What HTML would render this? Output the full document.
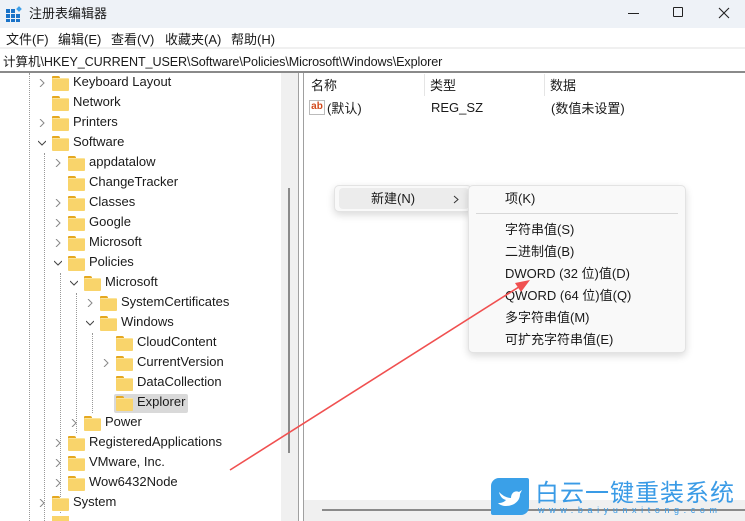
<!DOCTYPE html>
<html><head><meta charset="utf-8"><style>
*{margin:0;padding:0;box-sizing:border-box}
html{overflow:hidden;width:745px;height:521px}
body{width:745px;height:521px;overflow:hidden;background:#fff;font-family:"Liberation Sans","Noto Sans CJK SC",sans-serif;font-size:13px;color:#1a1a1a;position:relative}
.a{position:absolute;white-space:nowrap}
.row{position:absolute;height:20px;line-height:20px;white-space:nowrap;width:260px}
.fd{position:absolute;width:17px;height:14px;top:3px}
.fd:before{content:"";position:absolute;left:0;top:0;width:8px;height:4px;background:#e5a820;border-radius:1px 2px 0 0}
.fd:after{content:"";position:absolute;left:0;top:2px;width:17px;height:12px;background:#f9d46b;border-top:1px solid #fbe49b;border-radius:1px}
.ch{position:absolute;top:6px;width:8px;height:8px}
.t{position:absolute;left:21px;top:-1px}
.vd{position:absolute;width:0;border-left:1px dotted #999}
.c{margin-top:-2px}
</style></head><body>
<div class="a" style="left:0;top:0;width:745px;height:28px;background:#eef2f7"></div>
<svg class="a" style="left:6px;top:6px" width="16" height="16"><rect x="0" y="3" width="4" height="4" fill="#1a73c8"/><rect x="5" y="3" width="4" height="4" fill="#1a73c8"/><rect x="0" y="8" width="4" height="4" fill="#1a73c8"/><rect x="5" y="8" width="4" height="4" fill="#1a73c8"/><rect x="10" y="8" width="4" height="4" fill="#1a73c8"/><rect x="0" y="13" width="4" height="3" fill="#1a73c8"/><rect x="5" y="13" width="4" height="3" fill="#1a73c8"/><rect x="10" y="13" width="4" height="3" fill="#1a73c8"/><rect x="11" y="1" width="4" height="4" fill="#3fa0e8" transform="rotate(45 13 3)"/></svg>
<div class="a" style="left:29px;top:3px">注册表编辑器</div>
<div class="a" style="left:628px;top:13px;width:11px;height:1px;background:#222"></div>
<div class="a" style="left:673px;top:7px;width:10px;height:10px;border:1px solid #222;border-radius:1px"></div>
<svg class="a" style="left:718px;top:7px" width="12" height="12"><path d="M1 1L11 11M11 1L1 11" stroke="#222" stroke-width="1.1"/></svg>
<div class="a" style="left:6px;top:29px">文件(F)</div>
<div class="a" style="left:58px;top:29px">编辑(E)</div>
<div class="a" style="left:111px;top:29px">查看(V)</div>
<div class="a" style="left:165px;top:29px">收藏夹(A)</div>
<div class="a" style="left:231px;top:29px">帮助(H)</div>
<div class="a" style="left:0;top:47px;width:745px;height:2px;background:#f0f0f0"></div>
<div class="a" style="left:3px;top:51px;font-size:12.6px;letter-spacing:-0.1px">计算机\HKEY_CURRENT_USER\Software\Policies\Microsoft\Windows\Explorer</div>
<div class="a" style="left:0;top:71px;width:745px;height:2px;background:#8a8a8a"></div>
<div class="a" style="left:0;top:73px;width:299px;height:448px;border-right:1px solid #a0a0a0"></div>
<div class="a" style="left:281px;top:73px;width:17px;height:448px;background:#f0f0f0"></div>
<div class="a" style="left:288px;top:188px;width:2px;height:265px;background:#8a8a8a"></div>
<div class="a" style="left:303px;top:73px;width:442px;height:448px;border-left:1px solid #a0a0a0"></div>
<div class="a" style="left:304px;top:500px;width:441px;height:21px;background:#f0f0f0"></div>
<div class="a" style="left:322px;top:509px;width:423px;height:2px;background:#8a8a8a"></div>
<div class="vd" style="left:29px;top:73px;height:448px"></div>
<div class="vd" style="left:44px;top:153px;height:368px"></div>
<div class="vd" style="left:60px;top:273px;height:240px"></div>
<div class="vd" style="left:76px;top:293px;height:140px"></div>
<div class="vd" style="left:92px;top:333px;height:80px"></div>

<div class="row" style="left:38px;top:73px"><svg class="ch" style="left:0"><path d="M2 0L6 4L2 8" stroke="#888" fill="none"/></svg><div class="fd" style="left:14px"></div><div class="t" style="left:35px">Keyboard Layout</div></div>
<div class="row" style="left:38px;top:93px"><div class="fd" style="left:14px"></div><div class="t" style="left:35px">Network</div></div>
<div class="row" style="left:38px;top:113px"><svg class="ch" style="left:0"><path d="M2 0L6 4L2 8" stroke="#888" fill="none"/></svg><div class="fd" style="left:14px"></div><div class="t" style="left:35px">Printers</div></div>
<div class="row" style="left:38px;top:133px"><svg class="ch" style="left:0"><path d="M0 2L4 6L8 2" stroke="#444" fill="none"/></svg><div class="fd" style="left:14px"></div><div class="t" style="left:35px">Software</div></div>
<div class="row" style="left:54px;top:153px"><svg class="ch" style="left:0"><path d="M2 0L6 4L2 8" stroke="#888" fill="none"/></svg><div class="fd" style="left:14px"></div><div class="t" style="left:35px">appdatalow</div></div>
<div class="row" style="left:54px;top:173px"><div class="fd" style="left:14px"></div><div class="t" style="left:35px">ChangeTracker</div></div>
<div class="row" style="left:54px;top:193px"><svg class="ch" style="left:0"><path d="M2 0L6 4L2 8" stroke="#888" fill="none"/></svg><div class="fd" style="left:14px"></div><div class="t" style="left:35px">Classes</div></div>
<div class="row" style="left:54px;top:213px"><svg class="ch" style="left:0"><path d="M2 0L6 4L2 8" stroke="#888" fill="none"/></svg><div class="fd" style="left:14px"></div><div class="t" style="left:35px">Google</div></div>
<div class="row" style="left:54px;top:233px"><svg class="ch" style="left:0"><path d="M2 0L6 4L2 8" stroke="#888" fill="none"/></svg><div class="fd" style="left:14px"></div><div class="t" style="left:35px">Microsoft</div></div>
<div class="row" style="left:54px;top:253px"><svg class="ch" style="left:0"><path d="M0 2L4 6L8 2" stroke="#444" fill="none"/></svg><div class="fd" style="left:14px"></div><div class="t" style="left:35px">Policies</div></div>
<div class="row" style="left:70px;top:273px"><svg class="ch" style="left:0"><path d="M0 2L4 6L8 2" stroke="#444" fill="none"/></svg><div class="fd" style="left:14px"></div><div class="t" style="left:35px">Microsoft</div></div>
<div class="row" style="left:86px;top:293px"><svg class="ch" style="left:0"><path d="M2 0L6 4L2 8" stroke="#888" fill="none"/></svg><div class="fd" style="left:14px"></div><div class="t" style="left:35px">SystemCertificates</div></div>
<div class="row" style="left:86px;top:313px"><svg class="ch" style="left:0"><path d="M0 2L4 6L8 2" stroke="#444" fill="none"/></svg><div class="fd" style="left:14px"></div><div class="t" style="left:35px">Windows</div></div>
<div class="row" style="left:102px;top:333px"><div class="fd" style="left:14px"></div><div class="t" style="left:35px">CloudContent</div></div>
<div class="row" style="left:102px;top:353px"><svg class="ch" style="left:0"><path d="M2 0L6 4L2 8" stroke="#888" fill="none"/></svg><div class="fd" style="left:14px"></div><div class="t" style="left:35px">CurrentVersion</div></div>
<div class="row" style="left:102px;top:373px"><div class="fd" style="left:14px"></div><div class="t" style="left:35px">DataCollection</div></div>
<div class="a" style="left:114px;top:394px;width:74px;height:19px;background:#d9d9d9;border-radius:2px"></div>
<div class="row" style="left:102px;top:393px"><div class="fd" style="left:14px"></div><div class="t" style="left:35px">Explorer</div></div>
<div class="row" style="left:70px;top:413px"><svg class="ch" style="left:0"><path d="M2 0L6 4L2 8" stroke="#888" fill="none"/></svg><div class="fd" style="left:14px"></div><div class="t" style="left:35px">Power</div></div>
<div class="row" style="left:54px;top:433px"><svg class="ch" style="left:0"><path d="M2 0L6 4L2 8" stroke="#888" fill="none"/></svg><div class="fd" style="left:14px"></div><div class="t" style="left:35px">RegisteredApplications</div></div>
<div class="row" style="left:54px;top:453px"><svg class="ch" style="left:0"><path d="M2 0L6 4L2 8" stroke="#888" fill="none"/></svg><div class="fd" style="left:14px"></div><div class="t" style="left:35px">VMware, Inc.</div></div>
<div class="row" style="left:54px;top:473px"><svg class="ch" style="left:0"><path d="M2 0L6 4L2 8" stroke="#888" fill="none"/></svg><div class="fd" style="left:14px"></div><div class="t" style="left:35px">Wow6432Node</div></div>
<div class="row" style="left:38px;top:493px"><svg class="ch" style="left:0"><path d="M2 0L6 4L2 8" stroke="#888" fill="none"/></svg><div class="fd" style="left:14px"></div><div class="t" style="left:35px">System</div></div>
<div class="a" style="left:52px;top:516px;width:17px;height:5px;background:#f9d46b"></div>

<div class="a" style="left:311px;top:75px">名称</div>
<div class="a" style="left:424px;top:74px;width:1px;height:22px;background:#e5e5e5"></div>
<div class="a" style="left:430px;top:75px">类型</div>
<div class="a" style="left:544px;top:74px;width:1px;height:22px;background:#e5e5e5"></div>
<div class="a" style="left:550px;top:75px">数据</div>
<div class="a" style="left:309px;top:100px;width:16px;height:15px;border:1px solid #bbb;background:#fff;font-size:10px;font-weight:bold;color:#d24a1c;line-height:12px;text-align:center">ab</div>
<div class="a" style="left:327px;top:98px">(默认)</div>
<div class="a" style="left:431px;top:100px">REG_SZ</div>
<div class="a" style="left:551px;top:98px">(数值未设置)</div>

<div class="a" style="left:334px;top:185px;width:138px;height:27px;background:#f9f9f9;border:1px solid #e3e3e3;border-radius:5px;box-shadow:0 3px 8px rgba(0,0,0,.15)"></div>
<div class="a" style="left:339px;top:188px;width:130px;height:21px;background:#ececec;border-radius:4px"></div>
<div class="a" style="left:371px;top:188px">新建(N)</div>
<svg class="a" style="left:452px;top:195px" width="8" height="9"><path d="M2 1L6 4.5L2 8" stroke="#333" fill="none"/></svg>
<div class="a" style="left:468px;top:185px;width:218px;height:168px;background:#f9f9f9;border:1px solid #e3e3e3;border-radius:5px;box-shadow:0 3px 8px rgba(0,0,0,.15)"></div>
<div class="a" style="left:505px;top:188px">项(K)</div>
<div class="a" style="left:476px;top:213px;width:202px;height:1px;background:#d8d8d8"></div>
<div class="a" style="left:505px;top:219px">字符串值(S)</div>
<div class="a" style="left:505px;top:241px">二进制值(B)</div>
<div class="a" style="left:505px;top:263px">DWORD (32 位)值(D)</div>
<div class="a" style="left:505px;top:285px">QWORD (64 位)值(Q)</div>
<div class="a" style="left:505px;top:307px">多字符串值(M)</div>
<div class="a" style="left:505px;top:329px">可扩充字符串值(E)</div>

<svg class="a" style="left:0;top:0" width="745" height="521"><line x1="230" y1="470" x2="522" y2="285" stroke="#f05050" stroke-width="1.6"/><path d="M530 280L515 283L521 292Z" fill="#f05050"/></svg>

<div class="a" style="left:491px;top:478px;width:38px;height:37px;background:#3aa0e8;border-radius:8px 2px 8px 2px"></div>
<svg class="a" style="left:497px;top:486px" width="26" height="22"><path d="M2 6C6 10 10 12 14 12C14 7 18 4 22 6L25 4L23 8C23 15 17 20 9 20C6 20 3 19 1 17C5 17 7 16 9 14C5 13 3 10 2 6Z" fill="#fff"/></svg>
<div class="a" style="left:535px;top:477px;font-size:24px;color:#3a9be6;letter-spacing:1px;font-family:'Noto Sans CJK SC',sans-serif;line-height:28px">白云一键重装系统</div>
<div class="a" style="left:538px;top:505px;font-size:9px;color:#3a9be6;letter-spacing:4.6px">www.baiyunxitong.com</div>
</body></html>
